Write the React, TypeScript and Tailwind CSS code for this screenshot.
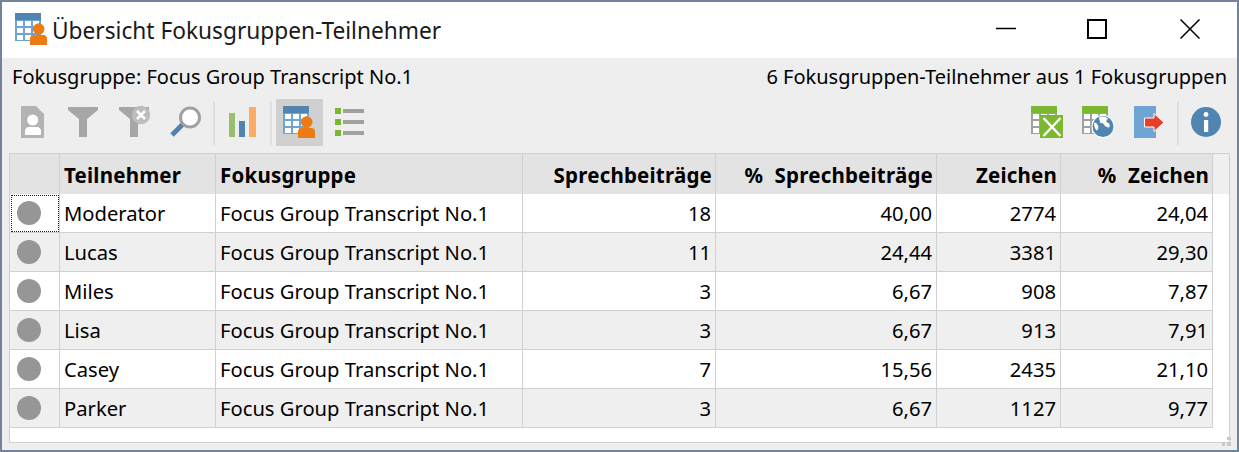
const rows = [
  ["Moderator", "18", "40,00", "2774", "24,04"],
  ["Lucas", "11", "24,44", "3381", "29,30"],
  ["Miles", "3", "6,67", "908", "7,87"],
  ["Lisa", "3", "6,67", "913", "7,91"],
  ["Casey", "7", "15,56", "2435", "21,10"],
  ["Parker", "3", "6,67", "1127", "9,77"],
];

function TableUser() {
  return (
    <svg width="32" height="32" viewBox="0 0 32 32">
      <rect x="0" y="0" width="26" height="28" fill="#6fa5d4" />
      <rect x="0" y="0" width="26" height="7" fill="#5085b2" />
      {[8, 15, 22].map((y) =>
        [2, 10, 18].map((x) => <rect key={`${x}-${y}`} x={x} y={y} width="6" height="5" fill="#fff" />)
      )}
      <circle cx="23.7" cy="16" r="5.8" fill="#ee7a14" />
      <path d="M15 32v-6c0-2.5 1.5-4 3.5-4h10c2 0 3.5 1.5 3.5 4v6z" fill="#ee7a14" />
    </svg>
  );
}

function Icon({ children }: { children: React.ReactNode }) {
  return <svg width="32" height="32" viewBox="0 0 32 32">{children}</svg>;
}

function Btn({ children, active }: { children: React.ReactNode; active?: boolean }) {
  return (
    <div className={`flex h-[47px] w-[47px] items-center justify-center pb-[1px] pr-[1px] ${active ? "bg-[#d0d0d0]" : ""}`}>{children}</div>
  );
}

function Sep() {
  return <div className="h-[44px] w-[2px] self-center bg-[#e0e0e0]" />;
}

function GridIcon() {
  return (
    <g>
      <rect x="0" y="0" width="26" height="28" fill="#a0a0a0" />
      {[8, 15, 22].map((y) =>
        [2, 10, 18].map((c) => <rect key={`${c}-${y}`} x={c} y={y} width="6" height="5" fill="#fff" />)
      )}
      <rect x="0" y="0" width="26" height="7" fill="#7cb82f" />
    </g>
  );
}

const line = "border-r border-[#d0d0d0]";

export default function App() {
  return (
    <div className="h-[452px] w-[1239px] overflow-hidden border-2 border-[#73849a] bg-[#eeeeee] font-['Noto_Sans','Open_Sans',sans-serif] text-[#000]">
      <div className="flex h-[56px] items-center bg-white">
        <div className="ml-[13px] mt-[-2px]"><TableUser /></div>
        <div className="ml-[5px] mt-[3px] text-[22.7px] text-[#1a1a1a]">Übersicht Fokusgruppen-Teilnehmer</div>
        <div className="mb-[2px] ml-auto flex items-center">
          <svg width="20" height="20" viewBox="0 0 20 20" className="mr-[71px]"><path d="M0 9.5h20" stroke="#000" strokeWidth="1.5" /></svg>
          <svg width="20" height="20" viewBox="0 0 20 20" className="mr-[73px]"><rect x="1" y="1" width="18" height="18" fill="none" stroke="#000" strokeWidth="2" /></svg>
          <svg width="20" height="20" viewBox="0 0 20 20" className="mr-[37px]"><path d="M.5.5l19 19M19.5.5l-19 19" stroke="#000" strokeWidth="1.5" /></svg>
        </div>
      </div>
      <div className="flex h-[37px] items-center justify-between pl-[10px] pr-[10px] text-[20px] leading-none">
        <span>Fokusgruppe: Focus Group Transcript No.1</span>
        <span>6 Fokusgruppen-Teilnehmer aus 1 Fokusgruppen</span>
      </div>
      <div className="mt-[4px] flex h-[47px] gap-[4px] pl-[7px] pr-[7px]">
        <Btn>
          <Icon><path d="M5 0h15l8 8v24H5z" fill="#b3b3b3" /><circle cx="16.7" cy="14" r="5.5" fill="#fff" /><path d="M9 29v-4c0-2.5 2-4 4-4h8c2 0 4 1.5 4 4v4z" fill="#fff" /></Icon>
        </Btn>
        <Btn>
          <Icon><path d="M1 1h30v3L20 13v18h-8V13L1 4z" fill="#a6a6a6" /></Icon>
        </Btn>
        <Btn>
          <Icon><path d="M1 1h30v3L20 13v18h-8V13L1 4z" fill="#a6a6a6" /><circle cx="23" cy="9" r="9.2" fill="#bdbdbd" /><path d="M19 5l8 8M27 5l-8 8" stroke="#fff" strokeWidth="2.5" /></Icon>
        </Btn>
        <Btn>
          <Icon><path d="M3 29l11-11" stroke="#4f84b0" strokeWidth="5" /><circle cx="21" cy="11.5" r="9.5" fill="#fff" stroke="#a0a0a0" strokeWidth="3" /></Icon>
        </Btn>
        <Sep />
        <Btn>
          <Icon><rect x="3" y="7" width="6" height="24" fill="#97bf6f" /><rect x="13" y="15" width="6" height="16" fill="#5085b2" /><rect x="23" y="1" width="7" height="30" fill="#fbab63" /></Icon>
        </Btn>
        <Sep />
        <Btn active><TableUser /></Btn>
        <Btn>
          <Icon><g fill="#7cb82f"><rect x="1" y="2" width="6" height="6" /><rect x="1" y="13" width="6" height="6" /><rect x="1" y="24" width="6" height="6" /></g><g fill="#a0a0a0"><rect x="9" y="3" width="21" height="4" /><rect x="9" y="14" width="21" height="4" /><rect x="9" y="25" width="21" height="4" /></g></Icon>
        </Btn>
        <div className="ml-auto" />
        <Btn>
          <Icon><GridIcon /><rect x="9" y="9" width="23" height="23" fill="#7cb82f" /><path d="M12.5 12l17 18M29.5 12l-17 18" stroke="#fff" strokeWidth="2.5" /></Icon>
        </Btn>
        <Btn>
          <Icon><GridIcon /><circle cx="21" cy="20.5" r="11.5" fill="#fff" /><circle cx="21" cy="20.5" r="10.5" fill="#5085b2" /><path d="M17 11.5c3-2 7-1 9 1l-2 3 3 2c1 1 1 3 0 4-2 0-4-1-5-3-1-2-3-1-4-2 0-2-1-3-1-5zM12 16.5c2 0 3 1 4 3s0 4-1 5c-2-1-3-4-3-8z" fill="#fff" /></Icon>
        </Btn>
        <Btn>
          <Icon><rect x="1" y="0" width="22" height="32" fill="#6fa5d4" /><path d="M11.5 12H21V7.5l10 9-10 9V21H11.5z" fill="#e2402c" stroke="#fff" strokeWidth="1" /></Icon>
        </Btn>
        <Sep />
        <Btn>
          <Icon><circle cx="16" cy="16" r="15" fill="#5085b2" /><circle cx="16" cy="8.5" r="2.4" fill="#fff" /><rect x="14" y="14" width="4.2" height="12" fill="#fff" /></Icon>
        </Btn>
      </div>
      <div className="relative ml-[7px] mt-[7px] h-[290px] w-[1221px] border border-[#d0d0d0] bg-white text-[20.2px]">
        <table className="w-[1219px] table-fixed border-separate border-spacing-0 leading-none">
          <colgroup>
            <col className="w-[50px]" />
            <col className="w-[156px]" />
            <col className="w-[307px]" />
            <col className="w-[193px]" />
            <col className="w-[221px]" />
            <col className="w-[124px]" />
            <col className="w-[152px]" />
            <col className="w-[16px]" />
          </colgroup>
          <thead>
            <tr className="h-[40px] text-[20.5px] tracking-[0.2px] [word-spacing:6px]">
              <th className={`${line} bg-[#e3e3e3]`} />
              <th className={`${line} bg-[#e3e3e3] pl-[4px] pt-[2px] text-left font-bold`}>Teilnehmer</th>
              <th className={`${line} bg-[#e3e3e3] pl-[4px] pt-[2px] text-left font-bold`}>Fokusgruppe</th>
              <th className={`${line} bg-[#e3e3e3] pr-[3px] pt-[2px] text-right font-bold`}>Sprechbeiträge</th>
              <th className={`${line} bg-[#e3e3e3] pr-[3px] pt-[2px] text-right font-bold`}>% Sprechbeiträge</th>
              <th className={`${line} bg-[#e3e3e3] pr-[3px] pt-[2px] text-right font-bold`}>Zeichen</th>
              <th className={`${line} bg-[#e3e3e3] pr-[3px] pt-[2px] text-right font-bold`}>% Zeichen</th>
              <th className="bg-[#efefef]" />
            </tr>
          </thead>
          <tbody>
            {rows.map((r, i) => {
              const bg = i % 2 ? "bg-[#efefef]" : "bg-white";
              const cell = `${line} border-b ${bg} pt-[1px]`;
              return (
                <tr key={r[0]} className="h-[39px]">
                  <td className={`${line} border-b ${bg} p-0`}>
                    <div className={`ml-[1px] flex h-[37px] w-[48px] items-center border border-dotted pl-[5px] ${i === 0 ? "border-[#0000ff]" : "border-transparent"}`}>
                      <div className="h-[24px] w-[24px] rounded-full bg-[#969696]" />
                    </div>
                  </td>
                  <td className={`${cell} pl-[4px]`}>{r[0]}</td>
                  <td className={`${cell} pl-[4px]`}>Focus Group Transcript No.1</td>
                  <td className={`${cell} pr-[4px] text-right`}>{r[1]}</td>
                  <td className={`${cell} pr-[4px] text-right`}>{r[2]}</td>
                  <td className={`${cell} pr-[4px] text-right`}>{r[3]}</td>
                  <td className={`${cell} pr-[4px] text-right`}>{r[4]}</td>
                  <td />
                </tr>
              );
            })}
          </tbody>
        </table>
        <svg width="10" height="10" viewBox="0 0 10 10" className="absolute bottom-[-5px] right-[-3px]"><g fill="#c8c8c8"><rect x="5" y="0" width="4" height="3" /><rect x="0" y="5" width="3" height="4" /><rect x="5" y="5" width="4" height="4" /></g></svg>
      </div>
    </div>
  );
}
